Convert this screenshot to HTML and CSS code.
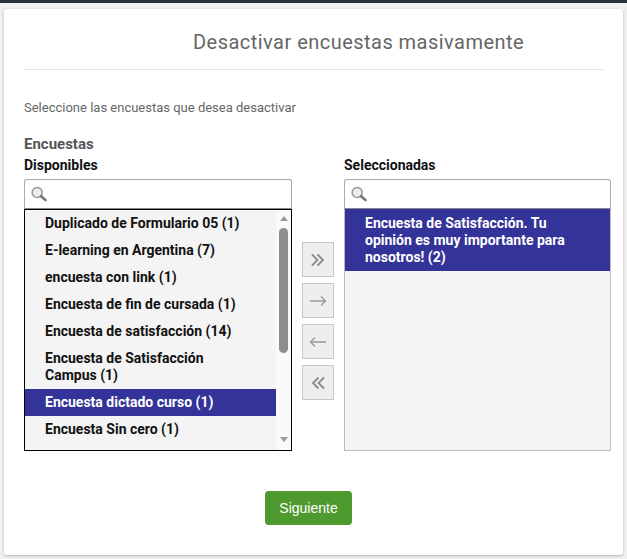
FILE: index.html
```html
<!DOCTYPE html>
<html lang="es">
<head>
<meta charset="utf-8">
<title>Desactivar encuestas masivamente</title>
<link rel="stylesheet" href="styles.css">
</head>
<body>
<div class="topbar"></div>
<main class="card">
  <h1 class="title">Desactivar encuestas masivamente</h1>
  <hr class="rule">
  <p class="intro">Seleccione las encuestas que desea desactivar</p>
  <h2 class="group">Encuestas</h2>
  <div class="picker">
    <section class="col">
      <h3 class="col-label">Disponibles</h3>
      <div class="search">
        <svg class="lens" width="18" height="18" viewBox="0 0 18 18"><circle cx="7.200" cy="7.500" r="5" fill="#e9eef0" stroke="#9a9a9a" stroke-width="1.600"/><path d="M11 11.200L15.500 15" stroke="#777" stroke-width="2.600" stroke-linecap="round"/></svg>
      </div>
      <div class="list list-active">
        <ul class="items">
          <li class="item">Duplicado de Formulario 05 (1)</li>
          <li class="item">E-learning en Argentina (7)</li>
          <li class="item">encuesta con link (1)</li>
          <li class="item">Encuesta de fin de cursada (1)</li>
          <li class="item">Encuesta de satisfacción (14)</li>
          <li class="item">Encuesta de Satisfacción Campus (1)</li>
          <li class="item selected">Encuesta dictado curso (1)</li>
          <li class="item">Encuesta Sin cero (1)</li>
        </ul>
        <div class="scrollbar">
          <span class="arrow-up"></span>
          <span class="thumb"></span>
          <span class="arrow-down"></span>
        </div>
      </div>
    </section>
    <div class="moves">
      <button class="move" type="button" aria-label="Mover todas"><svg width="16" height="14" viewBox="0 0 16 14"><path d="M2 1.500L7.500 7L2 12.500M7.500 1.500L13 7L7.500 12.500" fill="none" stroke="#8a8a8a" stroke-width="1.800"/></svg></button>
      <button class="move" type="button" aria-label="Mover"><svg width="18" height="12" viewBox="0 0 18 12"><path d="M1 6H16.500M12 1.500L16.500 6L12 10.500" fill="none" stroke="#999" stroke-width="1.300"/></svg></button>
      <button class="move" type="button" aria-label="Quitar"><svg width="18" height="12" viewBox="0 0 18 12"><path d="M17 6H1.500M6 1.500L1.500 6L6 10.500" fill="none" stroke="#999" stroke-width="1.300"/></svg></button>
      <button class="move" type="button" aria-label="Quitar todas"><svg width="16" height="14" viewBox="0 0 16 14"><path d="M14 1.500L8.500 7L14 12.500M8.500 1.500L3 7L8.500 12.500" fill="none" stroke="#8a8a8a" stroke-width="1.800"/></svg></button>
    </div>
    <section class="col">
      <h3 class="col-label">Seleccionadas</h3>
      <div class="search">
        <svg class="lens" width="18" height="18" viewBox="0 0 18 18"><circle cx="7.200" cy="7.500" r="5" fill="#e9eef0" stroke="#9a9a9a" stroke-width="1.600"/><path d="M11 11.200L15.500 15" stroke="#777" stroke-width="2.600" stroke-linecap="round"/></svg>
      </div>
      <div class="list">
        <ul class="items">
          <li class="item selected tall">Encuesta de Satisfacción. Tu opinión es muy importante para nosotros! (2)</li>
        </ul>
      </div>
    </section>
  </div>
  <div class="actions"><button class="next" type="button">Siguiente</button></div>
</main>
</body>
</html>
```
FILE: styles.css
```css
* { box-sizing: border-box; }
html, body { margin: 0; padding: 0; }
body {
  width: 627px;
  height: 559px;
  overflow: hidden;
  background: #f0f0f0;
  font-family: Roboto, "Liberation Sans", sans-serif;
}
.topbar { height: 3px; background: #263238; }
.card {
  width: 619px;
  height: 546px;
  margin: 6px 0 0 4px;
  padding: 0 20px;
  background: #fff;
  border-radius: 3px;
  box-shadow: 0 1px 3px rgba(0, 0, 0, .25);
}
.title {
  margin: 0;
  padding: 20px 0 0 169px;
  height: 60px;
  font-size: 20px;
  line-height: 26px;
  font-weight: 400;
  letter-spacing: .47px;
  color: #666;
}
.rule { margin: 0; border: 0; border-top: 1px solid #e2e2e2; }
.intro {
  margin: 29px 0 0;
  font-size: 13px;
  line-height: 17px;
  color: #666;
}
.group {
  margin: 20px 0 0;
  font-size: 15px;
  line-height: 17px;
  font-weight: 700;
  color: #555;
}
.picker { display: flex; align-items: flex-start; margin-top: 4px; }
.col { width: 268px; flex: none; }
.col + .moves + .col { width: 267px; }
.col-label {
  margin: 0 0 5px;
  font-size: 14px;
  line-height: 17px;
  font-weight: 700;
  color: #111;
}
.search {
  display: flex;
  align-items: center;
  height: 30px;
  padding: 0 0 0 5px;
  background: #fff;
  border: 1px solid #aaa;
  border-bottom-color: #888;
  border-radius: 3px 3px 0 0;
}
.list {
  display: flex;
  height: 242px;
  background: #f4f4f4;
  border: 1px solid #bbb;
  border-top: 0;
  overflow: hidden;
}
.list-active { border: 1px solid #000; }
.items { flex: 1; min-width: 0; margin: 0; padding: 0; list-style: none; }
.item {
  padding: 5px 30px 5px 20px;
  font-size: 14px;
  line-height: 17px;
  font-weight: 700;
  color: #111;
}
.selected { background: #333399; color: #fff; }
.tall { padding-top: 6px; padding-bottom: 5px; }
.scrollbar {
  display: flex;
  flex-direction: column;
  align-items: center;
  width: 15px;
  flex: none;
  background: #fafafa;
  padding-top: 6px;
}
.arrow-up, .arrow-down { width: 0; height: 0; border-left: 4.5px solid transparent; border-right: 4.5px solid transparent; }
.arrow-up { border-bottom: 5px solid #999; }
.arrow-down { border-top: 5px solid #999; margin-top: 84px; }
.thumb { width: 9px; height: 125px; margin-top: 7px; border-radius: 5px; background: #8e8e8e; }
.moves {
  width: 52px;
  flex: none;
  display: flex;
  flex-direction: column;
  gap: 6px;
  align-items: center;
  padding-top: 85px;
}
.move {
  display: flex;
  align-items: center;
  justify-content: center;
  width: 32px;
  height: 35px;
  padding: 0;
  background: #eee;
  border: 1px solid #c8c8c8;
}
.actions { display: flex; justify-content: center; margin-top: 40px; padding-right: 10px; }
.next {
  width: 87px;
  height: 34px;
  padding: 0;
  background: #4f9a2f;
  border: 0;
  border-radius: 4px;
  color: #fff;
  font-family: "Liberation Sans", Arial, sans-serif;
  font-size: 14px;
}
```
